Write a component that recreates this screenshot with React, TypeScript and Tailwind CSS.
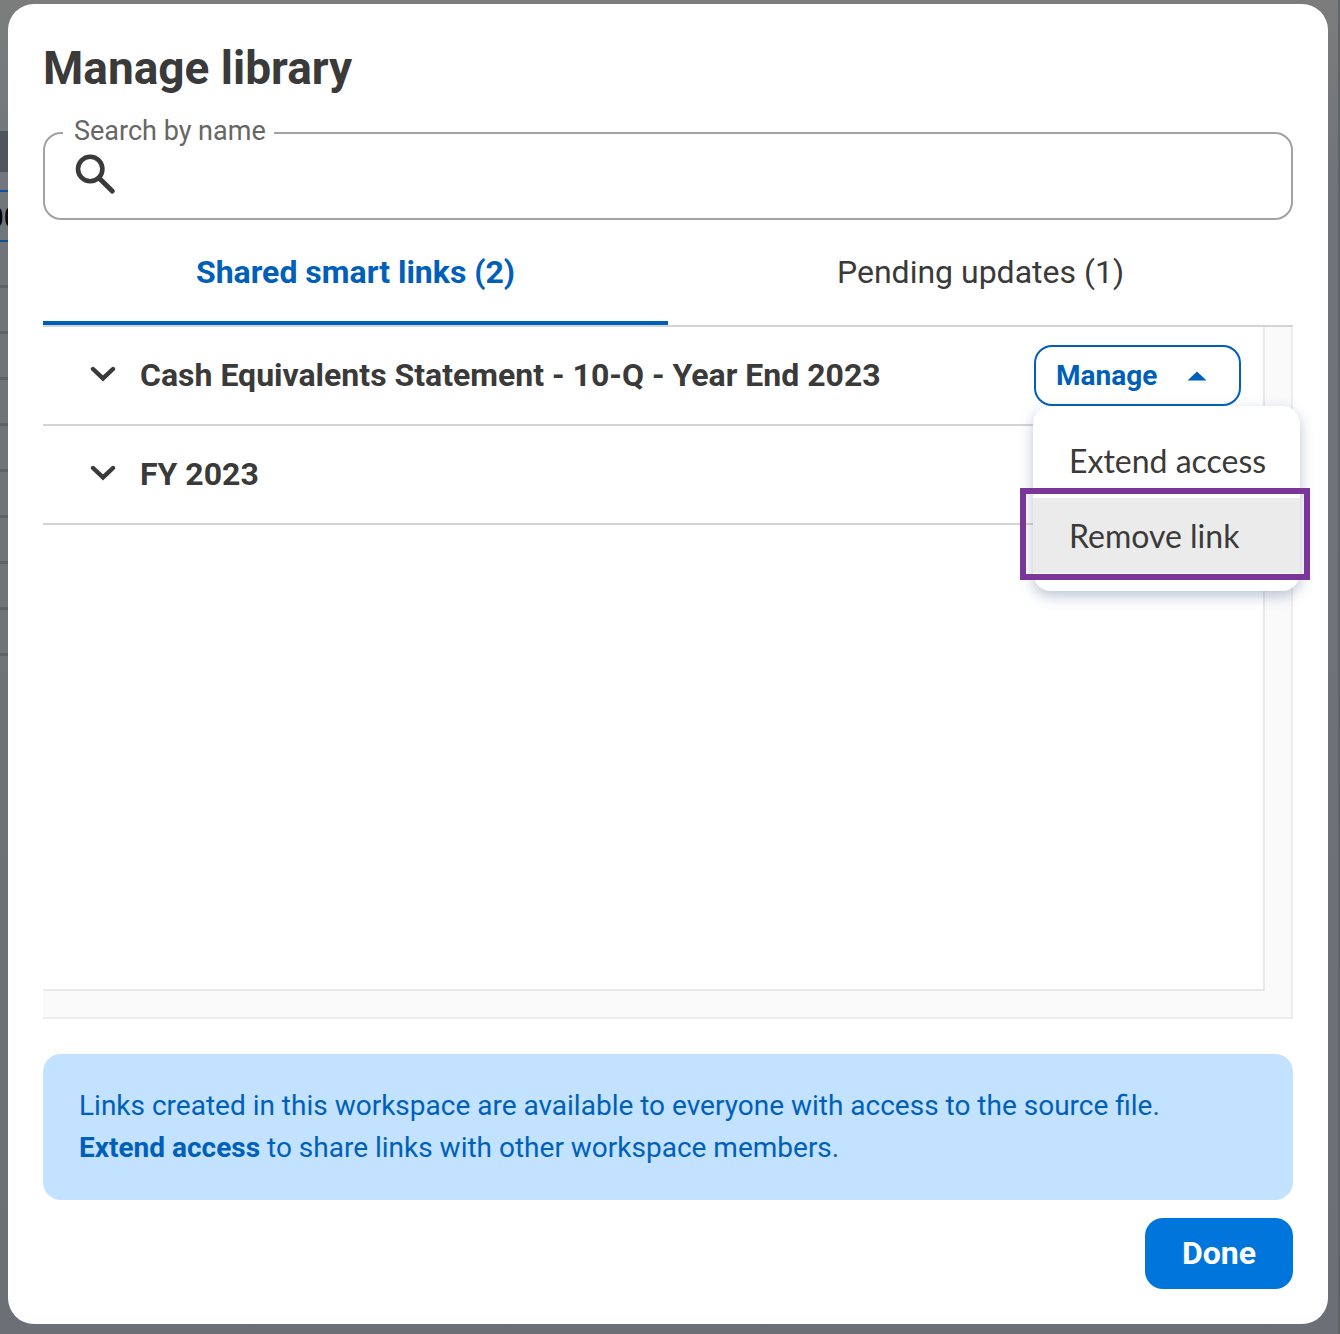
import { useState } from 'react'

interface SmartLink {
  id: string
  name: string
  menuOpen?: boolean
}

const links: SmartLink[] = [
  { id: 'cash', name: 'Cash Equivalents Statement - 10-Q - Year End 2023', menuOpen: true },
  { id: 'fy', name: 'FY 2023' },
]

const sheetRows = [1, 2, 3, 4, 5, 6, 7, 8, 9]

function SearchIcon() {
  return (
    <svg width="40" height="40" viewBox="0 0 40 40" fill="none" stroke="#3a3a3a" aria-hidden="true">
      <circle cx="15.2" cy="15" r="12.2" strokeWidth="4.6" />
      <path d="M24 24L37.2 37" strokeWidth="5" strokeLinecap="round" />
    </svg>
  )
}

function ChevronIcon() {
  return (
    <svg width="26" height="16" viewBox="0 0 26 16" fill="none" aria-hidden="true">
      <path d="M3 3L13 12.4L23 3" stroke="#3a3a3a" strokeWidth="4.4" strokeLinecap="round" />
    </svg>
  )
}

// Spreadsheet that shows around the edges of the dialog
function Backdrop() {
  return (
    <div
      aria-hidden="true"
      className="absolute inset-0 overflow-hidden border-r-2 border-[#5f6468] bg-linear-to-b from-[#7c7c7c] via-[#6f747b] via-15% to-[#6a7076]"
    >
      <div className="flex w-1/2 flex-col">
        <div className="h-[131px] bg-linear-to-b from-[#7c7c7c] to-[#72797b]" />
        <div className="h-[41px] bg-[#50545c]" />
        <div className="h-[18px] bg-[#717680]" />
        <div className="flex h-[52px] items-center border-y-2 border-[#0b5394] bg-[#70777a] pt-1">
          <span className="-ml-3 text-[28px] text-black">00</span>
        </div>
        {sheetRows.map((row) => (
          <div key={row} className="h-[46px] border-b-3 border-[#5e6269] bg-[#6f747b]" />
        ))}
      </div>
    </div>
  )
}

function ManageMenu() {
  return (
    <div
      role="menu"
      className="absolute top-full -left-px z-10 w-[267px] rounded-[18px] bg-white pt-[17px] pb-[18px] shadow-[0_5px_14px_rgba(60,85,135,0.35)]"
    >
      <button
        role="menuitem"
        className="block h-[75px] w-full pl-9 text-left font-['Lato'] text-[32px] whitespace-nowrap text-[#3a3a3a]"
      >
        Extend access
      </button>
      <div className="relative">
        <button
          role="menuitem"
          className="block h-[75px] w-full bg-[#ebebeb] pl-9 text-left font-['Lato'] text-[32px] whitespace-nowrap text-[#3a3a3a]"
        >
          Remove link
        </button>
        <div className="pointer-events-none absolute -top-[10px] -right-[10px] -bottom-[7px] -left-[13px] border-6 border-[#7a3699]" />
      </div>
    </div>
  )
}

function LinkRow({ link }: { link: SmartLink }) {
  const [open, setOpen] = useState(Boolean(link.menuOpen))

  return (
    <li className="flex h-[99px] items-center border-b-2 border-[#d4d4d4] pr-[22px] pl-[47px]">
      <button aria-label={`Expand ${link.name}`} className="mr-6 pb-1">
        <ChevronIcon />
      </button>
      <h2 className="flex-1 pb-0.5 text-[32px] font-bold">{link.name}</h2>
      {link.menuOpen && (
        <div className="relative">
          <button
            aria-haspopup="menu"
            aria-expanded={open}
            onClick={() => setOpen(!open)}
            className="flex h-[61px] w-[207px] items-center rounded-[18px] border-2 border-[#0060b9] bg-white pl-5 text-[28px] font-bold text-[#0060b9]"
          >
            <span className="flex-1 text-left">Manage</span>
            <svg width="20" height="10" viewBox="0 0 20 10" className="mr-8" aria-hidden="true">
              <path d="M0.5 9.5L10 0.5L19.5 9.5Z" fill="#0060b9" />
            </svg>
          </button>
          {open && <ManageMenu />}
        </div>
      )}
    </li>
  )
}

export default function App() {
  const [tab, setTab] = useState('shared')

  const active = 'border-[#0060b9] font-bold text-[#0060b9]'
  const inactive = 'border-transparent'

  return (
    <div className="relative flex min-h-screen flex-col pt-1 pr-3 pb-[10px] pl-2 font-['Roboto',sans-serif] text-[#3a3a3a]">
      <Backdrop />

      <div
        role="dialog"
        aria-labelledby="dialog-title"
        className="relative flex flex-1 flex-col rounded-[26px] bg-white px-[35px] pt-9 pb-[35px]"
      >
        <h1 id="dialog-title" className="text-[46px] leading-[56px] font-bold">
          Manage library
        </h1>

        {/* Search */}
        <div className="relative mt-9">
          <label htmlFor="search" className="absolute -top-[17px] left-5 bg-white pr-2 pl-[11px] text-[27px] leading-8 text-[#666]">
            Search by name
          </label>
          <input
            id="search"
            type="text"
            className="h-[88px] w-full rounded-[18px] border-2 border-[#a2a2a2] pr-8 pl-[88px] text-[28px] outline-none"
          />
          <div className="pointer-events-none absolute top-[22px] left-8">
            <SearchIcon />
          </div>
        </div>

        {/* Tabs */}
        <div role="tablist" className="flex border-b-2 border-[#d4d4d4]">
          <button
            role="tab"
            aria-selected={tab === 'shared'}
            onClick={() => setTab('shared')}
            className={`h-[105px] flex-1 basis-0 border-b-4 pt-0.5 text-[32px] ${tab === 'shared' ? active : inactive}`}
          >
            Shared smart links (2)
          </button>
          <button
            role="tab"
            aria-selected={tab === 'pending'}
            onClick={() => setTab('pending')}
            className={`h-[105px] flex-1 basis-0 border-b-4 pt-0.5 text-[32px] ${tab === 'pending' ? active : inactive}`}
          >
            Pending updates (1)
          </button>
        </div>

        {/* Link list with its scroll gutters */}
        <div className="flex flex-1 border-r-2 border-b-2 border-[#ededed] bg-[#fafafa] pr-[26px] pb-[26px]">
          <ul className="flex-1 border-r-2 border-b-2 border-[#e8e8e8] bg-white">
            {links.map((link) => (
              <LinkRow key={link.id} link={link} />
            ))}
          </ul>
        </div>

        <p className="mt-[35px] rounded-[18px] bg-[#c2e2ff] px-9 py-[31px] text-[28px] leading-[42px] text-[#0060b9]">
          Links created in this workspace are available to everyone with access to the source file.
          <br />
          <strong>Extend access</strong> to share links with other workspace members.
        </p>

        <button className="mt-[18px] h-[71px] w-[148px] self-end rounded-[18px] bg-[#0075db] pb-0.5 text-[32px] font-bold text-white">
          Done
        </button>
      </div>
    </div>
  )
}
